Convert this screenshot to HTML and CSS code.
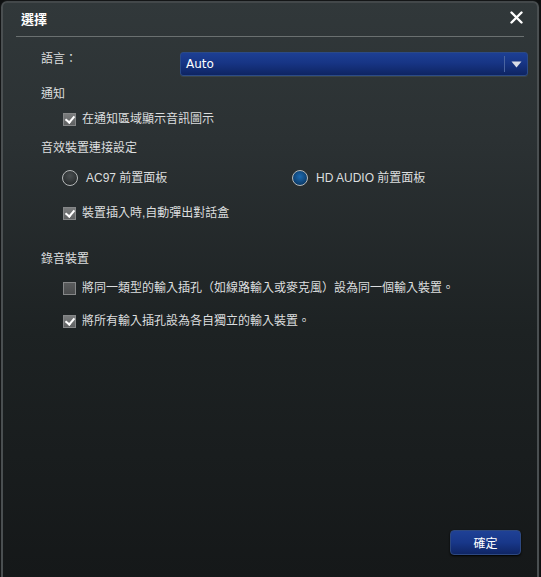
FILE: index.html
```html
<!DOCTYPE html>
<html lang="zh-Hant">
<head>
<meta charset="utf-8">
<title>選擇</title>
<link rel="stylesheet" href="styles.css">
</head>
<body>
<div class="dialog">
  <div class="titlebar">
    <span class="title">選擇</span>
    <span class="close">
      <svg width="13" height="13" viewBox="0 0 13 13"><path d="M1.5 1.5 L11.5 11.5 M11.5 1.5 L1.5 11.5" stroke="#ffffff" stroke-width="2.4" stroke-linecap="round"/></svg>
    </span>
  </div>
  <div class="rule"></div>
  <div class="content">
    <div class="row lang">
      <span class="label">語言：</span>
      <div class="select">
        <span class="select-text">Auto</span>
        <span class="select-sep"></span>
        <span class="select-arrow">
          <svg width="11" height="7" viewBox="0 0 11 7"><path d="M0.5 0.5 H10.5 L5.5 6.5 Z" fill="#d9dde6"/></svg>
        </span>
      </div>
    </div>
    <div class="row heading r-notify">通知</div>
    <div class="row option r-notify-cb"><span class="cb checked"></span><span>在通知區域顯示音訊圖示</span></div>
    <div class="row heading r-audio">音效裝置連接設定</div>
    <div class="row radios r-radios">
      <div class="radio-item"><span class="radio"></span><span>AC97 前置面板</span></div>
      <div class="radio-item right"><span class="radio on"></span><span>HD AUDIO 前置面板</span></div>
    </div>
    <div class="row option r-popup"><span class="cb checked"></span><span>裝置插入時,自動彈出對話盒</span></div>
    <div class="row heading r-rec">錄音裝置</div>
    <div class="row option r-rec1"><span class="cb"></span><span>將同一類型的輸入插孔（如線路輸入或麥克風）設為同一個輸入裝置。</span></div>
    <div class="row option r-rec2"><span class="cb checked"></span><span>將所有輸入插孔設為各自獨立的輸入裝置。</span></div>
  </div>
  <div class="footer">
    <button class="ok">確定</button>
  </div>
</div>
</body>
</html>
```
FILE: styles.css
```css
html, body {
  margin: 0;
  padding: 0;
  background: #0e1011;
}
body {
  width: 541px;
  height: 577px;
  font-family: "Liberation Sans", "Noto Sans CJK TC", sans-serif;
  font-size: 12px;
  color: #dcdedf;
}
.dialog {
  box-sizing: border-box;
  width: 540px;
  height: 577px;
  border: 1px solid #141617;
  border-bottom: none;
  border-radius: 7px 7px 0 0;
  box-shadow: inset 2px 0 0 #4a4f51, inset -2px 0 0 #4a4f51, inset 0 2px 0 #43484a;
  background: linear-gradient(to bottom, #31383a 0px, #2b3133 140px, #1d2223 330px, #151819 577px);
  display: flex;
  flex-direction: column;
}
.titlebar {
  height: 35px;
  display: flex;
  align-items: center;
  justify-content: space-between;
  padding: 0 16px 0 20px;
}
.title {
  font-weight: bold;
  font-size: 13px;
  color: #ffffff;
  margin-top: -1px;
}
.close {
  display: flex;
  margin-top: -2px;
}
.rule {
  height: 1px;
  margin: 0 15px 0 15px;
  background: #6a7070;
}
.content {
  padding-left: 40px;
  padding-right: 11px;
  display: flex;
  flex-direction: column;
}
.row {
  line-height: 16px;
  height: 16px;
  display: flex;
  align-items: center;
}
.lang {
  margin-top: 15px;
  height: 24px;
  align-items: flex-start;
}
.lang .label {
  width: 139px;
  line-height: 12px;
  padding-top: 1px;
}
.select {
  flex: 1;
  height: 24px;
  box-sizing: border-box;
  border-radius: 3px;
  border: 1px solid #2b4a86;
  background: linear-gradient(to bottom, #1d3f94 0%, #173585 45%, #0e2462 100%);
  display: flex;
  align-items: center;
  box-shadow: 0 1px 0 #3b4548;
}
.select-text {
  flex: 1;
  padding-left: 5px;
  color: #ffffff;
  font-family: "DejaVu Sans", "Liberation Sans", sans-serif;
  font-size: 12px;
}
.select-sep {
  width: 1px;
  height: 16px;
  background: #4a64a0;
}
.select-arrow {
  width: 22px;
  display: flex;
  justify-content: center;
  padding-top: 1px;
}
.r-notify { margin-top: 10px; }
.r-notify-cb { margin-top: 9px; }
.r-audio { margin-top: 13px; }
.r-radios { margin-top: 14px; }
.r-popup { margin-top: 19px; }
.r-rec { margin-top: 30px; }
.r-rec1 { margin-top: 13px; }
.r-rec2 { margin-top: 17px; }
.option {
  padding-left: 22px;
}
.cb {
  box-sizing: border-box;
  width: 13px;
  height: 13px;
  border: 1px solid #858788;
  background: linear-gradient(to bottom, #5a5c5d, #4a4c4d);
  margin-right: 6px;
  position: relative;
  flex: none;
}
.cb.checked {
  background: linear-gradient(to bottom, #7a7c7d, #5f6162);
}
.cb.checked::after {
  content: "";
  position: absolute;
  left: 3px;
  top: 0px;
  width: 4px;
  height: 7px;
  border-right: 2.5px solid #ffffff;
  border-bottom: 2.5px solid #ffffff;
  transform: rotate(40deg);
}
.radios {
  padding-left: 21px;
}
.radio-item {
  display: flex;
  align-items: center;
  width: 230px;
  font-family: "Liberation Sans", "Noto Sans CJK TC", sans-serif;
  font-size: 12px;
}
.radio {
  box-sizing: border-box;
  width: 16px;
  height: 16px;
  border-radius: 50%;
  border: 1.5px solid #b5b8b9;
  background: radial-gradient(circle at 50% 35%, #4a4f51, #1c2021);
  margin-right: 8px;
  flex: none;
}
.radio.on {
  background: radial-gradient(circle at 50% 40%, #1d6ab0, #0a3763 80%);
}
.footer {
  margin-top: auto;
  display: flex;
  justify-content: flex-end;
  padding: 0 18px 22px 0;
}
.ok {
  width: 71px;
  height: 25px;
  border: 1px solid #2d4880;
  border-radius: 4px;
  background: linear-gradient(to bottom, #1f4196 0%, #183789 50%, #0f2564 100%);
  color: #ffffff;
  font-family: "Liberation Sans", "Noto Sans CJK TC", sans-serif;
  font-size: 12px;
  padding: 0;
  box-shadow: 0 1px 2px #000;
}
```
